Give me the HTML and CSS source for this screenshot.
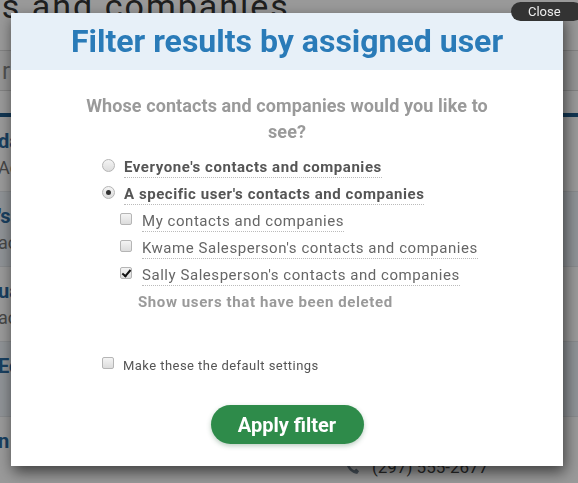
FILE: index.html
```html
<!DOCTYPE html>
<html lang="en">
<head>
  <meta charset="UTF-8" />
  <meta name="viewport" content="width=device-width, initial-scale=1.0"/>
  <title>Contacts and companies</title>
  <link rel="stylesheet" href="styles.css">
</head>
<body>

<!-- Page behind the modal -->
<div class="page">
  <h1 class="page-title">Contacts and companies</h1>
  <div class="search-row">r</div>
  <div class="tab-line"></div>
  <div class="list">
    <div class="row">
      <div class="row-name">dale Industries</div>
      <div class="row-sub">Ac</div>
    </div>
    <div class="row alt">
      <div class="row-name">'s Bakery</div>
      <div class="row-sub">ac</div>
    </div>
    <div class="row">
      <div class="row-name">ua Systems</div>
      <div class="row-sub">ac</div>
    </div>
    <div class="row alt">
      <div class="row-name">Ec</div>
    </div>
    <div class="row last">
      <div class="row-name">n</div>
      <div class="row-phone">
        <svg width="15" height="15" viewBox="0 0 16 16"><path d="M4 1l3 3-2 2c1 2 3 4 5 5l2-2 3 3-2 3C7 14 2 9 1 3z" fill="#7a8a99"/></svg>
        (297) 555-2677
      </div>
    </div>
  </div>
</div>

<div class="overlay"></div>

<!-- Filter modal -->
<div class="modal">
  <div class="modal-header">
    <h2>Filter results by assigned user</h2>
  </div>
  <div class="modal-body">
    <p class="question">Whose contacts and companies would you like to see?</p>

    <div class="options">
      <label class="option main">
        <input type="radio" name="who" class="radio" />
        <span class="dotted">Everyone's contacts and companies</span>
      </label>
      <label class="option main">
        <input type="radio" name="who" class="radio" checked />
        <span class="dotted">A specific user's contacts and companies</span>
      </label>

      <div class="users">
        <label class="option user">
          <input type="checkbox" class="check" />
          <span class="dotted">My contacts and companies</span>
        </label>
        <label class="option user">
          <input type="checkbox" class="check" />
          <span class="dotted">Kwame Salesperson's contacts and companies</span>
        </label>
        <label class="option user">
          <input type="checkbox" class="check" checked />
          <span class="dotted">Sally Salesperson's contacts and companies</span>
        </label>
        <div class="show-deleted">Show users that have been deleted</div>
      </div>
    </div>

    <label class="option default">
      <input type="checkbox" class="check" />
      <span>Make these the default settings</span>
    </label>

    <div class="actions">
      <button class="apply">Apply filter</button>
    </div>
  </div>
</div>

<button class="close">Close</button>

</body>
</html>
```

FILE: styles.css
```css
body {
  margin: 0;
  font-family: Roboto, "Liberation Sans", sans-serif;
  background: #fff;
  overflow: hidden;
  height: 483px;
}
.page {
  background: #fff;
}
.page-title {
  margin: -12px 0 0 -131px;
  height: 62px;
  font-size: 34px;
  line-height: 36px;
  font-weight: 400;
  letter-spacing: 2px;
  color: #333;
  white-space: nowrap;
}
.search-row {
  height: 39px;
  border-top: 1px solid #d8d8d8;
  border-bottom: 1px solid #d8d8d8;
  background: #f6f6f6;
  font-size: 24px;
  line-height: 40px;
  color: #888;
  padding-left: 2px;
}
.tab-line {
  height: 22px;
  border-bottom: 4px solid #1e5a8a;
}
.row {
  height: 75px;
  border-bottom: 1px solid #e2e6ea;
  padding-top: 12px;
  box-sizing: border-box;
  white-space: nowrap;
  position: relative;
}
.row.alt {
  background: #eef4fa;
}
.row-name {
  font-size: 20px;
  font-weight: bold;
  color: #2a6aa0;
  margin-left: -2px;
}
.row-sub {
  font-size: 18px;
  color: #777;
  margin-top: 4px;
  margin-left: -2px;
}
.row-phone {
  position: absolute;
  left: 345px;
  top: 40px;
  font-size: 17px;
  color: #444;
  display: flex;
  align-items: center;
  gap: 12px;
}
.overlay {
  position: fixed;
  inset: 0;
  background: rgba(0, 0, 0, 0.4);
}
.modal {
  position: fixed;
  left: 11px;
  top: 13px;
  width: 552px;
  height: 453px;
  background: #fff;
  box-shadow: 2px 6px 14px rgba(0, 0, 0, 0.6);
}
.modal-header {
  background: #e7f0f8;
  height: 57px;
  text-align: center;
}
.modal-header h2 {
  margin: 0;
  font-size: 32px;
  line-height: 57px;
  color: #2a7bb8;
  font-weight: bold;
}
.modal-body {
  padding: 23px 0 0;
}
.question {
  margin: 0 auto;
  width: 430px;
  text-align: center;
  font-size: 18px;
  font-weight: bold;
  line-height: 26px;
  color: #9a9a9a;
  letter-spacing: 0.1px;
}
.options {
  margin: 9px 0 0 91px;
}
.option {
  display: flex;
  align-items: center;
  height: 27px;
  cursor: pointer;
}
.option.main {
  font-size: 15px;
  font-weight: bold;
  color: #555;
  letter-spacing: 0.55px;
}
.users {
  margin-left: 18px;
}
.option.user {
  font-size: 15px;
  color: #666;
  letter-spacing: 0.55px;
}
.dotted {
  border-bottom: 1px dotted #bbb;
  line-height: 19px;
}
.show-deleted {
  margin: 4px 0 0 18px;
  font-size: 15px;
  font-weight: bold;
  color: #9a9a9a;
  letter-spacing: 0.6px;
}
.radio,
.check {
  appearance: none;
  margin: 0 10px 0 0;
  width: 13px;
  height: 13px;
  border: 1px solid #b5b5b5;
  background: linear-gradient(#f4f4f4, #dcdcdc);
  box-sizing: border-box;
  position: relative;
  flex-shrink: 0;
}
.radio {
  border-radius: 50%;
  margin-right: 9px;
  margin-top: -4px;
}
.radio:checked::after {
  content: "";
  position: absolute;
  left: 3px;
  top: 3px;
  width: 5px;
  height: 5px;
  border-radius: 50%;
  background: #333;
}
.check {
  border-radius: 2px;
  width: 12px;
  height: 12px;
  margin-right: 10px;
  margin-top: -5px;
}
.check:checked::after {
  content: "";
  position: absolute;
  left: 3px;
  top: 0px;
  width: 3px;
  height: 7px;
  border: solid #111;
  border-width: 0 2px 2px 0;
  transform: rotate(40deg);
}
.option.default {
  margin: 41px 0 0 91px;
  font-size: 13px;
  color: #555;
  letter-spacing: 0.45px;
}
.option.default .check {
  margin-right: 9px;
}
.actions {
  text-align: center;
  margin-top: 26px;
}
.apply {
  width: 153px;
  height: 39px;
  border: none;
  border-radius: 20px;
  background: #2e8b4a;
  color: #fff;
  font-family: inherit;
  font-size: 20px;
  font-weight: bold;
  box-shadow: 0 2px 5px rgba(30, 90, 50, 0.3);
  cursor: pointer;
}
.close {
  position: fixed;
  top: 2px;
  left: 511px;
  width: 72px;
  height: 19px;
  border: none;
  border-radius: 10px;
  background: #333;
  color: #eee;
  font-family: inherit;
  font-size: 13px;
  text-align: left;
  padding: 0 0 0 17px;
}
```
